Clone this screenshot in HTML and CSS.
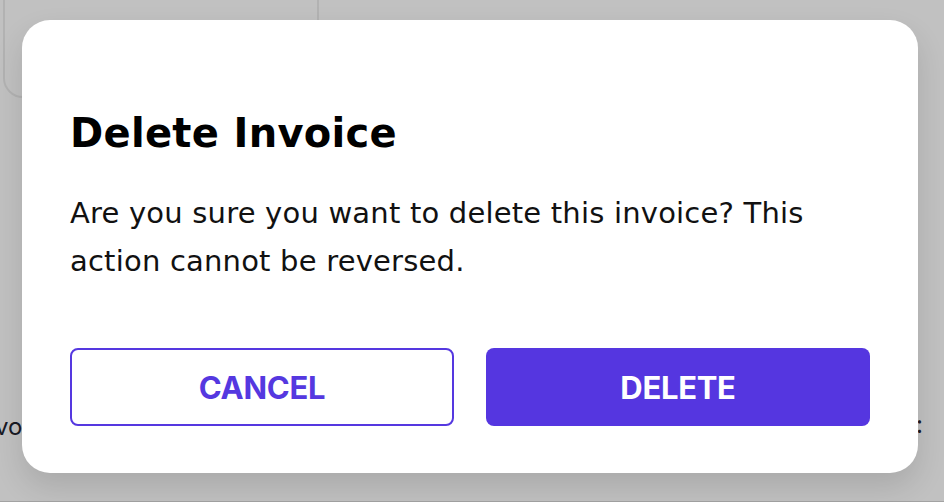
FILE: index.html
```html
<!DOCTYPE html>
<html lang="en">
<head>
<meta charset="utf-8">
<title>Delete Invoice</title>
<link rel="stylesheet" href="styles.css">
</head>
<body>
<div class="page">
  <div class="bg-card"></div>
  <div class="bg-text-left">vo</div>
  <div class="bg-text-right">:</div>
</div>
<div class="overlay">
  <div class="modal" role="dialog" aria-labelledby="t">
    <h1 id="t" class="title">Delete Invoice</h1>
    <p class="message">Are you sure you want to delete this invoice? This action cannot be reversed.</p>
    <div class="actions">
      <button class="btn btn-outline">CANCEL</button>
      <button class="btn btn-solid">DELETE</button>
    </div>
  </div>
</div>
</body>
</html>
```
FILE: styles.css
```css
* { box-sizing: border-box; }
html, body {
  margin: 0;
  width: 944px;
  height: 502px;
  overflow: hidden;
}
body {
  font-family: "DejaVu Sans", "Inter", sans-serif;
  background: #ffffff;
  position: relative;
}
.page {
  position: absolute;
  inset: 0;
  border-bottom: 1px solid #d8d8d8;
}
.bg-card {
  position: absolute;
  left: 3px;
  top: -30px;
  width: 316px;
  height: 128px;
  border: 2px solid #ececec;
  border-radius: 20px;
}
.bg-text-left {
  position: absolute;
  left: -5px;
  top: 412px;
  font-family: "Inter", sans-serif;
  font-size: 24px;
  color: #1f2430;
}
.bg-text-right {
  position: absolute;
  left: 916px;
  top: 410px;
  font-family: "Inter", sans-serif;
  font-size: 24px;
  color: #1f2430;
}
.overlay {
  position: absolute;
  inset: 0;
  background: rgba(0, 0, 0, 0.245);
  padding: 20px 26px 29px 22px;
  display: flex;
  align-items: flex-start;
}
.modal {
  width: 896px;
  height: 453px;
  background: #ffffff;
  border-radius: 28px;
  padding: 48px 48px 47px;
  display: flex;
  flex-direction: column;
  box-shadow: 0 14px 30px rgba(0, 0, 0, 0.12);
}
.title {
  margin: 41px 0 0;
  font-family: "DejaVu Sans", sans-serif;
  font-size: 40px;
  line-height: 48px;
  font-weight: 700;
  color: #000;
  letter-spacing: 0.3px;
}
.message {
  margin: 32px 0 0;
  font-family: "DejaVu Sans", sans-serif;
  font-size: 29px;
  line-height: 48px;
  font-weight: 400;
  color: #111;
  letter-spacing: 0.2px;
  max-width: 790px;
}
.actions {
  margin-top: auto;
  display: flex;
  gap: 32px;
}
.btn {
  flex: none;
  width: 384px;
  height: 78px;
  padding: 0;
  border-radius: 8px;
  font-family: "Inter", sans-serif;
  font-size: 31px;
  font-weight: 700;
  letter-spacing: -0.3px;
  cursor: pointer;
}
.btn-outline {
  background: #fff;
  color: #5538e0;
  border: 2px solid #5538e0;
}
.btn-solid {
  background: #5536e0;
  color: #fff;
  border: none;
}
```
